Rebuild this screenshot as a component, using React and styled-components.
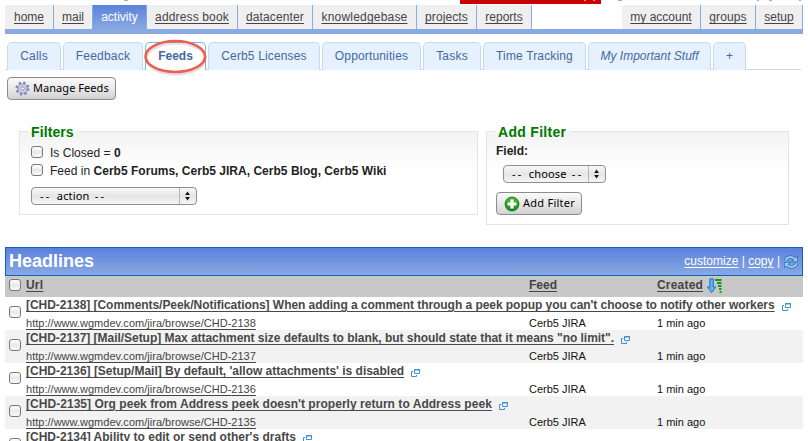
import React from 'react';
import styled, { createGlobalStyle, css } from 'styled-components';

const Global = createGlobalStyle`
  *, *::before, *::after { box-sizing: border-box; }
  body { margin: 0; background: #fff; overflow: hidden; font: 12px/18px "Liberation Sans", Arial, sans-serif; color: #222; }
`;

const Page = styled.div`
  width: 808px;
  height: 441px;
  overflow: hidden;
  padding-left: 5px;
  display: flex;
  flex-direction: column;
`;

const TopEdge = styled.svg`
  flex: none;
  display: block;
  width: 798px;
  height: 5px;
`;

const Nav = styled.nav`
  flex: none;
  width: 798px;
  height: 29px;
  display: flex;
  border-bottom: 5px solid #88a9e2;
`;

const NavItem = styled.a`
  width: ${p => p.$w}px;
  height: 24px;
  flex: none;
  text-align: center;
  line-height: 24px;
  letter-spacing: ${p => p.$ls || 0}px;
  white-space: nowrap;
  background: #efefef;
  color: #444;
  text-decoration: underline;
  text-underline-offset: 2px;
  border-right: 1px solid #88a9e2;
  ${p => p.$first && css`margin-left: auto;`}
  ${p => p.$active && css`
    background: linear-gradient(#5c81dc, #88a9e2);
    color: #fff;
    text-decoration: none;
  `}
`;

const Tabs = styled.div`
  flex: none;
  width: 796px;
  height: 28px;
  margin-top: 8px;
  padding-left: 2px;
  display: flex;
  gap: 2px;
  background: linear-gradient(#c5dbec, #c5dbec) 0 27px / 100% 1px no-repeat;
`;

const Tab = styled.a`
  position: relative;
  flex: none;
  width: ${p => p.$w}px;
  height: 28px;
  border: 1px solid ${p => (p.$active ? '#79b7e7' : '#c5dbec')};
  border-bottom: 0;
  border-radius: 5px 5px 0 0;
  background: ${p => (p.$active ? '#fff' : '#e6f1fe')};
  color: #4468a0;
  font-weight: ${p => (p.$active ? 'bold' : 'normal')};
  font-style: ${p => (p.$italic ? 'italic' : 'normal')};
  letter-spacing: ${p => p.$ls || 0}px;
  line-height: 27px;
  text-align: center;
  white-space: nowrap;
`;

const Ring = styled.svg`
  position: absolute;
  z-index: 2;
  left: -5px;
  top: -6px;
  width: 70px;
  height: 42px;
`;

const Button = styled.button`
  width: ${p => p.$w}px;
  height: 23px;
  padding: 0 0 2px 7px;
  display: flex;
  align-items: center;
  gap: 3px;
  border: 1px solid #8c8c8c;
  border-radius: 4px;
  background: linear-gradient(#fafafa, #e8e8e8 50%, #d2d2d2);
  font: 11px "Noto Sans", sans-serif;
  letter-spacing: ${p => p.$ls || 0}px;
  white-space: nowrap;
  color: #000;
  svg { flex: none; margin-top: 2px; }
`;

const Toolbar = styled.div`
  flex: none;
  padding-left: 2px;
  margin-top: 7px;
  height: 23px;
`;

const Panels = styled.div`
  flex: none;
  height: 116px;
  margin: 31px 0 0 14px;
  display: flex;
  align-items: flex-start;
  gap: 8px;
`;

const Panel = styled.section`
  width: ${p => p.$w}px;
  height: ${p => p.$h}px;
  border: 1px solid #e4e4e4;
  background: linear-gradient(#f3f3f3, #fff 40px);
  padding: 0 ${p => p.$pad}px;
`;

const Legend = styled.h2`
  width: max-content;
  margin: -10px 0 0 ${p => p.$x}px;
  padding: 0 3px;
  height: 21px;
  font-size: 14px;
  line-height: 20px;
  color: #007800;
  letter-spacing: ${p => p.$ls}px;
  background: linear-gradient(#fff 10px, transparent 10px);
`;

const FilterLine = styled.div`
  height: 18px;
  display: flex;
  align-items: center;
  gap: 7px;
  letter-spacing: 0.02px;
  white-space: pre;
  > :last-child { padding-top: 1px; }
`;

const Check = styled.span`
  flex: none;
  width: 12px;
  height: 12px;
  border: 1px solid #777;
  border-radius: 3px;
  background: linear-gradient(#fff, #e8e8e8 50%, #fafafa);
`;

const FieldLabel = styled.div`
  height: 17px;
  line-height: 17px;
  font-weight: bold;
`;

const SelectBox = styled.div`
  width: ${p => p.$w}px;
  height: 18px;
  margin: ${p => p.$m};
  padding-left: 8px;
  display: flex;
  justify-content: space-between;
  align-items: center;
  border: 1px solid #8f8f8f;
  border-radius: 4px;
  background: linear-gradient(#f8f8f8, #e5e5e5 50%, #f5f5f5);
  font: 11px/16px "Noto Sans", sans-serif;
  letter-spacing: 0.15px;
  white-space: pre;
  color: #000;
  svg { width: 17px; height: 16px; border-left: 1px solid #b5b5b5; }
`;

const Dashes = styled.span`
  letter-spacing: 2.3px;
`;

const Titlebar = styled.header`
  flex: none;
  width: 798px;
  height: 29px;
  padding: 0 4px 2px 3px;
  display: flex;
  justify-content: space-between;
  align-items: center;
  border: 1px solid #1161bd;
  background: linear-gradient(#5c81dc, #88a9e2);
  color: #fff;
  h1 { margin: 0; font-size: 18px; line-height: 27px; height: 25px; }
`;

const Actions = styled.div`
  display: flex;
  align-items: center;
  white-space: pre;
  a { text-decoration: underline; text-underline-offset: 2px; }
  svg { margin: 2px 0 0 4px; }
`;

const Row = styled.div`
  flex: none;
  width: 798px;
  height: ${p => p.$h || 33}px;
  display: grid;
  grid-template-columns: 21px 503px 128px 1fr;
  background: ${p => p.$bg || '#fff'};
  > ${Check} { margin: ${p => (p.$h ? '3px' : '9px')} 0 0 4px; }
`;

const HeadCell = styled.b`
  font-size: 12px;
  line-height: 19px;
  height: 19px;
  color: #444;
  letter-spacing: ${p => p.$ls || 0}px;
  display: flex;
  gap: 4px;
  align-items: center;
  u { text-underline-offset: 2px; }
`;

const UrlCell = styled.div`
  min-width: 0;
  white-space: nowrap;
`;

const Headline = styled.div`
  height: 17px;
  display: flex;
  align-items: flex-start;
  gap: 7px;
  font-weight: bold;
  line-height: 17px;
  color: #484848;
  letter-spacing: ${p => p.$ls}px;
  u { text-underline-offset: 2px; }
  svg { flex: none; margin-top: 6px; }
`;

const Link = styled.a`
  display: block;
  height: 16px;
  font-size: 11px;
  line-height: 18px;
  color: #444;
  text-decoration: underline;
  text-underline-offset: 2px;
  letter-spacing: 0.02px;
`;

const Meta = styled.div`
  font-size: 11px;
  line-height: 14px;
  padding-top: 19px;
  color: #111;
`;

const Arrows = () => (
  <svg viewBox="0 0 17 16"><path d="M5.5 7 8 3.3 10.5 7ZM5.5 9 8 12.7 10.5 9Z" fill="#111" /></svg>
);

const Gear = () => (
  <svg width="15" height="15" viewBox="0 0 16 16">
    <circle cx="8" cy="8" r="6.3" fill="none" stroke="#8585b5" strokeWidth="2.4" strokeDasharray="2.5 2.45" />
    <circle cx="8" cy="8" r="4.8" fill="#d9d9f0" stroke="#8b8bbb" strokeWidth="1.3" />
    <circle cx="8" cy="8" r="2" fill="#f5f5f5" stroke="#7979ad" />
  </svg>
);

const Plus = () => (
  <svg width="16" height="16" viewBox="0 0 16 16">
    <defs><linearGradient id="plus" x2="0" y2="1"><stop stopColor="#55bd3c" /><stop offset="1" stopColor="#168a12" /></linearGradient></defs>
    <circle cx="8" cy="8" r="6.9" fill="url(#plus)" stroke="#0c7a10" />
    <path d="M6.4 3.5h3.2v2.9h2.9v3.2H9.6v2.9H6.4V9.6H3.5V6.4h2.9z" fill="#fff" />
  </svg>
);

const Refresh = () => (
  <svg width="14" height="14" viewBox="0 0 14 14" fill="none">
    <path d="M1.3 5.5C2.5 1.5 8 .3 11 4M12.7 8.5C11.5 12.5 6 13.7 3 10" stroke="#2270b8" strokeWidth="3" />
    <path d="M13.5 1v5.7H7.8zM.5 13V7.3h5.7z" fill="#9bd2f7" stroke="#2270b8" strokeWidth=".8" />
    <path d="M1.5 5.5C2.5 1.8 8 .6 11 4M12.5 8.5C11.5 12.2 6 13.4 3 10" stroke="#a9dbfa" strokeWidth="1.5" />
  </svg>
);

const Sort = () => (
  <svg width="16" height="16" viewBox="0 0 16 16">
    <path d="M2.8.8h3.6V9h2.5L4.6 14.7.4 9h2.4z" fill="#5eb0ee" stroke="#2475c5" />
    <path d="M8 2h6.5M10 5h4.5M11 8h3.5M12 11h2.5M12.7 14h1.8" stroke="#0f9a16" strokeWidth="2" />
  </svg>
);

const Popup = () => (
  <svg width="9" height="8" viewBox="0 0 9 8" fill="none" stroke="#3d91d6">
    <path d="M3.5.5h5v4h-5zM3 1h6M2 2.5H.5v5h5V6" />
  </svg>
);

const leftNav = [
  ['home', 49], ['mail', 39], ['activity', 54], ['address book', 91, 0.15], ['datacenter', 75, 0.12],
  ['knowledgebase', 104, 0.2], ['projects', 60, 0.1], ['reports', 55],
];
const rightNav = [['my account', 79], ['groups', 55, 0.1], ['setup', 47]];
const tabs = [
  ['Calls', 54, 0.2], ['Feedback', 80, 0.2], ['Feeds', 61], ['Cerb5 Licenses', 112, 0.15], ['Opportunities', 99, 0.15],
  ['Tasks', 58, 0.2], ['Time Tracking', 103, 0.15], ['My Important Stuff', 123], ['+', 33],
];
const feeds = [
  ['2138', "[Comments/Peek/Notifications] When adding a comment through a peek popup you can't choose to notify other workers", -0.046],
  ['2137', '[Mail/Setup] Max attachment size defaults to blank, but should state that it means "no limit".', -0.04],
  ['2136', "[Setup/Mail] By default, 'allow attachments' is disabled", -0.015],
  ['2135', "Org peek from Address peek doesn't properly return to Address peek", 0.04],
  ['2134', "Ability to edit or send other's drafts", 0],
];

export default function App() {
  return (
    <Page>
      <Global />
      <TopEdge viewBox="0 0 798 5">
        <path d="M455 0h141v4H455z" fill="#c00" />
        <path d="M579 0h2v1h-2zM588 0h2v1h-2z" fill="#e9a0a0" />
        <path d="M119 0h4v1h-4zM613 0h4v1h-4zM752 0h2v1h-2zM764 0h3v1h-3zM794 0h2v1h-2z" fill="#aaa" />
      </TopEdge>
      <Nav>
        {leftNav.map(([t, w, ls]) => <NavItem key={t} $w={w} $ls={ls} $active={t === 'activity'}>{t}</NavItem>)}
        {rightNav.map(([t, w, ls], i) => <NavItem key={t} $w={w} $ls={ls} $first={i === 0}>{t}</NavItem>)}
      </Nav>
      <Tabs>
        {tabs.map(([t, w, ls]) => (
          <Tab key={t} $w={w} $ls={ls} $active={t === 'Feeds'} $italic={t.startsWith('My')}>
            {t}
            {t === 'Feeds' && (
              <Ring viewBox="0 0 70 42">
                <ellipse cx="35" cy="21.5" rx="29.5" ry="15.5" fill="none" stroke="#999" strokeOpacity=".3" strokeWidth="3" />
                <ellipse cx="34.3" cy="19.5" rx="29.8" ry="15.5" fill="none" stroke="#ec5f50" strokeWidth="2.6" />
              </Ring>
            )}
          </Tab>
        ))}
      </Tabs>
      <Toolbar><Button $w={109} $ls={0.05}><Gear />Manage Feeds</Button></Toolbar>
      <Panels>
        <Panel $w={459} $h={84} $pad={11}>
          <Legend $x={-3} $ls={0.1}>Filters</Legend>
          <FilterLine><Check /><span>Is Closed = <b>0</b></span></FilterLine>
          <FilterLine><Check /><span>Feed in <b>Cerb5 Forums, Cerb5 JIRA, Cerb5 Blog, Cerb5 Wiki</b></span></FilterLine>
          <SelectBox $w={166} $m="8px 0 0"><span><Dashes>-- </Dashes>action<Dashes> --</Dashes></span><Arrows /></SelectBox>
        </Panel>
        <Panel $w={303} $h={94} $pad={9}>
          <Legend $x={-1} $ls={0.3}>Add Filter</Legend>
          <FieldLabel>Field:</FieldLabel>
          <SelectBox $w={103} $m="5px 0 9px 7px"><span><Dashes>-- </Dashes>choose<Dashes> --</Dashes></span><Arrows /></SelectBox>
          <Button $w={86} $ls={0.25}><Plus />Add Filter</Button>
        </Panel>
      </Panels>
      <Titlebar>
        <h1>Headlines</h1>
        <Actions><a>customize</a> | <a>copy</a> |<Refresh /></Actions>
      </Titlebar>
      <Row $h={21} $bg="#c8c8c8">
        <Check />
        <HeadCell $ls={0.2}><u>Url</u></HeadCell>
        <HeadCell><u>Feed</u></HeadCell>
        <HeadCell $ls={0.2}><u>Created</u><Sort /></HeadCell>
      </Row>
      {feeds.map(([id, title, ls], i) => {
        const last = i === feeds.length - 1;
        return (
          <Row key={id} $bg={i % 2 ? '#f2f2f2' : '#fff'}>
            <Check />
            <UrlCell>
              <Headline $ls={ls}><u>[CHD-{id}] {title}</u><Popup /></Headline>
              {!last && <Link>http://www.wgmdev.com/jira/browse/CHD-{id}</Link>}
            </UrlCell>
            {!last && <Meta>Cerb5 JIRA</Meta>}
            {!last && <Meta>1 min ago</Meta>}
          </Row>
        );
      })}
    </Page>
  );
}
